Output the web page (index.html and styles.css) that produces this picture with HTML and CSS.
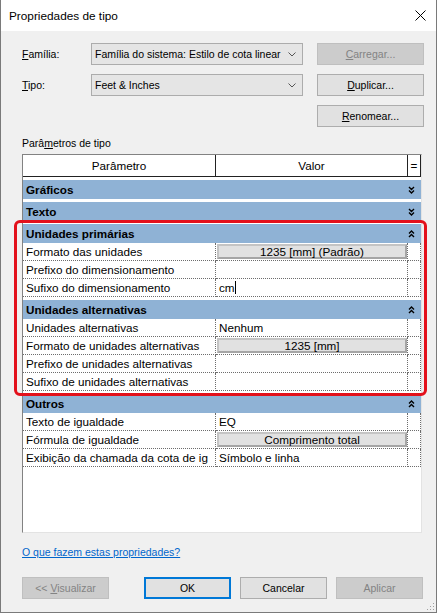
FILE: index.html
```html
<!DOCTYPE html>
<html lang="pt">
  <head>
    <meta charset="UTF-8" />
    <title>Propriedades de tipo</title>
    <link rel="stylesheet" href="styles.css">
  </head>
  <body>
    <div class="dialog">
      <div class="titlebar">
        <span class="title">Propriedades de tipo</span>
        <svg class="close" width="11" height="11" viewBox="0 0 11 11">
          <path d="M0.5 0.5L10.5 10.5M10.5 0.5L0.5 10.5" stroke="#000" stroke-width="1" fill="none" />
        </svg>
      </div>

      <div class="content">
        <div class="type-form">
          <label class="field-label"><u>F</u>amília:</label>
          <div class="combo">
            <span>Família do sistema: Estilo de cota linear</span>
            <svg width="8" height="5" viewBox="0 0 8 5"><path d="M0.5 0.5L4 4L7.5 0.5" stroke="#555" fill="none" /></svg>
          </div>
          <button class="btn" disabled><u>C</u>arregar...</button>

          <label class="field-label"><u>T</u>ipo:</label>
          <div class="combo">
            <span>Feet &amp; Inches</span>
            <svg width="8" height="5" viewBox="0 0 8 5"><path d="M0.5 0.5L4 4L7.5 0.5" stroke="#555" fill="none" /></svg>
          </div>
          <button class="btn"><u>D</u>uplicar...</button>

          <button class="btn rename"><u>R</u>enomear...</button>
        </div>

        <div class="section-label">Parâ<u>m</u>etros de tipo</div>

        <div class="prop-grid">
          <div class="grid-head">
            <span>Parâmetro</span>
            <span>Valor</span>
            <span>=</span>
          </div>

          <div class="group">
            <span>Gráficos</span>
            <svg class="chev" width="7" height="8" viewBox="0 0 7 8"><path d="M1 1L3.5 3.5L6 1M1 4.5L3.5 7L6 4.5" /></svg>
          </div>
          <div class="group">
            <span>Texto</span>
            <svg class="chev" width="7" height="8" viewBox="0 0 7 8"><path d="M1 1L3.5 3.5L6 1M1 4.5L3.5 7L6 4.5" /></svg>
          </div>

          <div class="group">
            <span>Unidades primárias</span>
            <svg class="chev" width="7" height="8" viewBox="0 0 7 8"><path d="M1 3.5L3.5 1L6 3.5M1 7L3.5 4.5L6 7" /></svg>
          </div>
          <div class="prop">
            <span>Formato das unidades</span>
            <span><span class="val-btn">1235 [mm] (Padrão)</span></span>
            <span></span>
          </div>
          <div class="prop">
            <span>Prefixo do dimensionamento</span>
            <span></span>
            <span></span>
          </div>
          <div class="prop">
            <span>Sufixo do dimensionamento</span>
            <span>cm<i class="caret"></i></span>
            <span></span>
          </div>

          <div class="group">
            <span>Unidades alternativas</span>
            <svg class="chev" width="7" height="8" viewBox="0 0 7 8"><path d="M1 3.5L3.5 1L6 3.5M1 7L3.5 4.5L6 7" /></svg>
          </div>
          <div class="prop">
            <span>Unidades alternativas</span>
            <span>Nenhum</span>
            <span></span>
          </div>
          <div class="prop">
            <span>Formato de unidades alternativas</span>
            <span><span class="val-btn">1235 [mm]</span></span>
            <span></span>
          </div>
          <div class="prop">
            <span>Prefixo de unidades alternativas</span>
            <span></span>
            <span></span>
          </div>
          <div class="prop">
            <span>Sufixo de unidades alternativas</span>
            <span></span>
            <span></span>
          </div>

          <div class="group">
            <span>Outros</span>
            <svg class="chev" width="7" height="8" viewBox="0 0 7 8"><path d="M1 3.5L3.5 1L6 3.5M1 7L3.5 4.5L6 7" /></svg>
          </div>
          <div class="prop">
            <span>Texto de igualdade</span>
            <span>EQ</span>
            <span></span>
          </div>
          <div class="prop">
            <span>Fórmula de igualdade</span>
            <span><span class="val-btn">Comprimento total</span></span>
            <span></span>
          </div>
          <div class="prop">
            <span>Exibição da chamada da cota de ig</span>
            <span>Símbolo e linha</span>
            <span></span>
          </div>
        </div>

        <a class="help-link" href="#">O que fazem estas propriedades?</a>

        <div class="footer">
          <button class="btn" disabled>&lt;&lt; <u>V</u>isualizar</button>
          <div class="footer-right">
            <button class="btn default">OK</button>
            <button class="btn">Cancelar</button>
            <button class="btn" disabled>Aplicar</button>
          </div>
        </div>
      </div>

      <!-- highlight drawn over the grid -->
      <div class="highlight"></div>

      <svg class="grip" width="10" height="10" viewBox="0 0 10 10">
        <rect x="8" y="2" width="1" height="1" />
        <rect x="5" y="5" width="1" height="1" />
        <rect x="8" y="5" width="1" height="1" />
        <rect x="2" y="8" width="1" height="1" />
        <rect x="5" y="8" width="1" height="1" />
        <rect x="8" y="8" width="1" height="1" />
      </svg>
    </div>
  </body>
</html>
```

FILE: styles.css
```css
body {
  margin: 0;
  font-family: "Liberation Sans", Arial, sans-serif;
  font-size: 10.5px;
  color: #000;
  background: #f0f0f0;
}

.dialog {
  position: relative;
  width: 437px;
  height: 613px;
  box-sizing: border-box;
  border: 1px solid #7a7a7a;
  border-top: none;
  background: #f0f0f0;
  display: flex;
  flex-direction: column;
}

.titlebar {
  height: 31px;
  flex: none;
  background: #fff;
  display: flex;
  align-items: center;
  justify-content: space-between;
  padding: 0 10px 0 8px;
}

.title {
  font-size: 11.8px;
}

.close {
  display: block;
}

.content {
  flex: 1;
  padding: 12px 12px 0 21px;
  display: flex;
  flex-direction: column;
}

/* top form */
.type-form {
  display: grid;
  grid-template-columns: 55px 212px 107px;
  column-gap: 14px;
  row-gap: 9px;
  grid-auto-rows: 22px;
}

.field-label {
  align-self: center;
}

.combo {
  box-sizing: border-box;
  border: 1px solid #acacac;
  background: #e5e5e5;
  display: flex;
  align-items: center;
  justify-content: space-between;
  padding: 0 6px 0 3px;
  white-space: nowrap;
  overflow: hidden;
}

.btn {
  box-sizing: border-box;
  height: 22px;
  border: 1px solid #adadad;
  background: #e1e1e1;
  font: inherit;
  color: #000;
  padding: 0;
}

.btn:disabled {
  background: #cccccc;
  border-color: #bfbfbf;
  color: #838383;
}

.btn.default {
  border: 2px solid #0078d7;
}

.rename {
  grid-column: 3;
}

.section-label {
  margin: 9px 0 4px;
  line-height: 14px;
}

/* property grid */
.prop-grid {
  box-sizing: border-box;
  width: 400px;
  height: 379px;
  background: #fff;
  border: 1px solid;
  border-color: #828282 #e3e3e3 #e3e3e3 #828282;
  font-size: 11.7px;
  overflow: hidden;
}

.grid-head,
.prop {
  display: grid;
  grid-template-columns: 193px 192px 13px;
}

.grid-head {
  height: 22px;
  box-sizing: border-box;
  border-bottom: 1px solid #222;
}

.grid-head span {
  border-right: 1px solid #222;
  text-align: center;
  line-height: 21px;
}

.group {
  margin-top: 3px;
  height: 19px;
  background: #8fb2d5;
  display: flex;
  align-items: center;
  justify-content: space-between;
  padding: 0 6px 0 3px;
  font-weight: bold;
}

.chev {
  display: block;
  fill: none;
  stroke: #000;
  stroke-width: 1.4;
}

.prop {
  height: 18px;
}

.prop > span {
  box-sizing: border-box;
  border-right: 1px dotted #6d6d6d;
  border-bottom: 1px dotted #6d6d6d;
  padding-left: 3px;
  line-height: 17px;
  white-space: nowrap;
  overflow: hidden;
}

.val-btn {
  display: block;
  box-sizing: border-box;
  margin: 1px 0 0 -2px;
  height: 15px;
  border: 2px solid;
  border-color: #c4c4c4 #a5a5a5 #a5a5a5 #c4c4c4;
  background: #e1e1e1;
  text-align: center;
  line-height: 11px;
}

.caret {
  display: inline-block;
  width: 1px;
  height: 13px;
  background: #000;
  vertical-align: -2px;
}

.help-link {
  margin-top: 12px;
  line-height: 15px;
  color: #0066cc;
  align-self: flex-start;
}

.footer {
  margin: 17px 1px 0 0;
  display: flex;
  justify-content: space-between;
}

.footer .btn {
  width: 87px;
}

.footer-right {
  display: flex;
  gap: 9px;
}

.highlight {
  position: absolute;
  left: 13px;
  top: 220px;
  width: 413px;
  height: 176px;
  box-sizing: border-box;
  border: 3px solid #e3101b;
  border-radius: 6px;
}

.grip {
  position: absolute;
  right: 1px;
  bottom: 1px;
  fill: #a0a0a0;
}
```
